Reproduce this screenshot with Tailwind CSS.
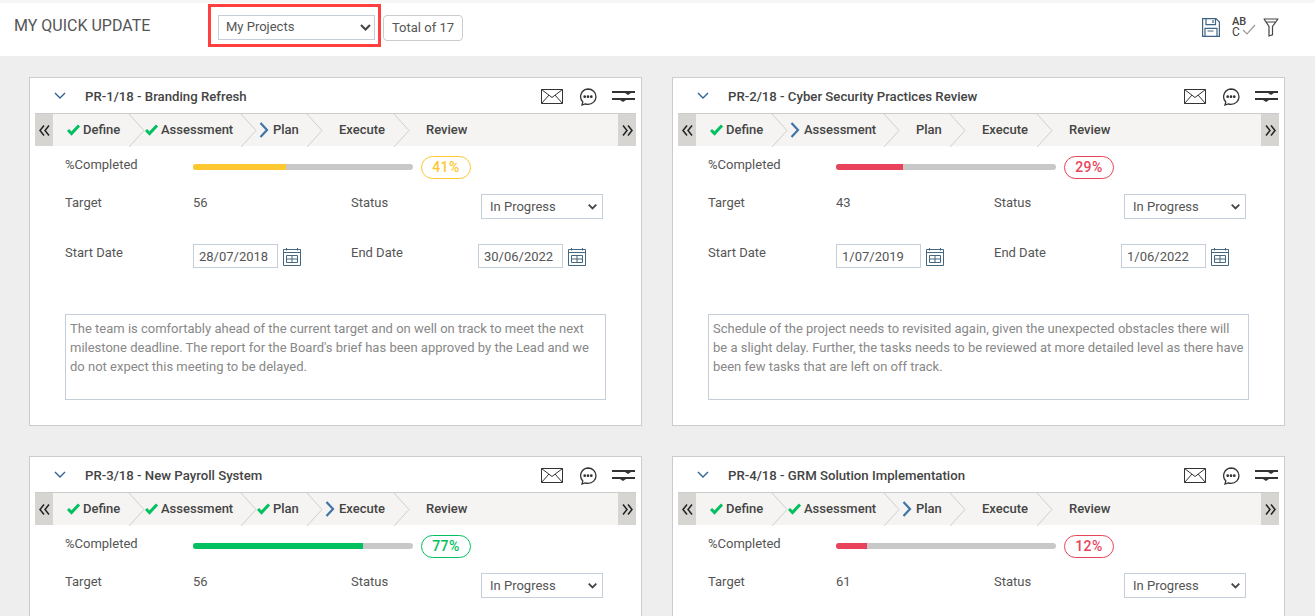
<!DOCTYPE html>
<html lang="en">
<head>
  <meta charset="UTF-8" />
  <title>My Quick Update</title>
  <script src="https://cdn.jsdelivr.net/npm/@tailwindcss/browser@4"></script>
</head>
<body class="h-[616px] overflow-hidden bg-[#eeeeee] font-['Roboto',sans-serif] text-[13px] text-[#555555]">
  <!-- Top bar -->
  <div class="h-[56px] flex items-center bg-white border-t-[3px] border-[#f6f6f6] pb-[3px]">
    <h1 class="w-[208px] pl-[14px] mb-[4px] text-[16px] text-[#555555]">MY QUICK UPDATE</h1>
    <div class="w-[173px] h-[43px] mb-[5px] border-[3px] border-[#ff4040] flex items-center pl-[7px]">
      <div class="w-[157px] h-[25px] mt-[3px] border border-[#c5cfdc] flex items-center justify-between pl-[7px] pr-[3px]">
        <span>My Projects</span>
        <svg width="11" height="7" viewBox="0 0 11 7" fill="none" stroke="#444" stroke-width="2"><path d="M1 1l4.500 4.500L10 1"/></svg>
      </div>
    </div>
    <div class="ml-[2px] w-[80px] h-[26px] border border-[#cccccc] rounded-[4px] flex items-center justify-center">Total of 17</div>
    <div class="ml-auto mr-[36px] flex items-center mt-[-2px]">
      <svg width="18" height="19" viewBox="0 0 18 19" fill="none" stroke="#3f6382" stroke-width="1.200"><path d="M.6.600h13.400L17.400 4v14.400H.6z"/><path d="M4 .6v6h9.500v-6M11 2v3M3 18.400v-8h12v8M5.500 13h6"/></svg>
      <div class="relative ml-[12px] w-[24px] h-[20px] flex flex-col text-[11px] leading-[10px] font-medium text-[#444444]">
        <span>AB</span>
        <span class="font-normal text-[12px]">C</span>
        <svg class="absolute left-0 top-0" width="24" height="20" viewBox="0 0 24 20" fill="none"><path d="M11 13l4 4 8-9" stroke="#999" stroke-width="1.200"/></svg>
      </div>
      <svg class="ml-[7px]" width="16" height="19" viewBox="0 0 16 19" fill="none" stroke="#444" stroke-width="1.200"><path d="M.6 1h14.800M1 1l5 7.500V18l3.500-1.200V8.500L15 1M3 4h10"/></svg>
    </div>
  </div>

  <div id="cards" class="grid grid-cols-[613px_613px] gap-x-[30px] gap-y-[30px] pl-[29px] pt-[21px]"></div>

  <script>
    const projects = [
      { title: "PR-1/18 - Branding Refresh", done: 2, pct: 41, fill: 42.3, bar: "bg-[#fdc82f]", pill: "border-[#fdc82f] text-[#fdc82f]", target: 56, start: "28/07/2018", end: "30/06/2022",
        note: "The team is comfortably ahead of the current target and on well on track to meet the next milestone deadline. The report for the Board's brief has been approved by the Lead and we do not expect this meeting to be delayed." },
      { title: "PR-2/18 - Cyber Security Practices Review", done: 1, pct: 29, fill: 30.5, bar: "bg-[#e8435a]", pill: "border-[#e8435a] text-[#e8435a]", target: 43, start: "1/07/2019", end: "1/06/2022",
        note: "Schedule of the project needs to revisited again, given the unexpected obstacles there will be a slight delay. Further, the tasks needs to be reviewed at more detailed level as there have been few tasks that are left on off track." },
      { title: "PR-3/18 - New Payroll System", done: 3, pct: 77, fill: 77.3, bar: "bg-[#00c060]", pill: "border-[#00c060] text-[#00c060]", target: 56, start: "", end: "", note: "" },
      { title: "PR-4/18 - GRM Solution Implementation", done: 2, pct: 12, fill: 14, bar: "bg-[#e8435a]", pill: "border-[#e8435a] text-[#e8435a]", target: 61, start: "", end: "", note: "" },
    ];

    const steps = [
      { name: "Define", cls: "w-[91px] pl-[14px]" },
      { name: "Assessment", cls: "w-[112px] pl-[1px]" },
      { name: "Plan", cls: "w-[66px] pl-[1px]" },
      { name: "Execute", cls: "w-[87px] pl-[1px]" },
      { name: "Review", cls: "w-[100px] pl-[1px]" },
    ];

    const check = `<svg width="14" height="12" viewBox="0 0 14 12" fill="none" stroke="#00c060" stroke-width="3"><path d="M1 6l3.500 3.500L12 1.500"/></svg>`;
    const current = `<svg width="12" height="16" viewBox="0 0 12 16" fill="none" stroke="#3f74a6" stroke-width="2.200"><path d="M3.500 1l6.500 7-6.500 7"/></svg>`;
    const separator = `<svg class="absolute right-[-1px] top-0" width="17" height="33" viewBox="0 0 17 33" fill="none" stroke="#cfcfcf" stroke-width="1"><path d="M1 0l15 16.500L1 33"/></svg>`;
    const calendar = `<svg width="18" height="19" viewBox="0 0 18 19" fill="none" stroke="#45667f" stroke-width="1"><path d="M.5 2.500h17v16H.5zM3.500 1v2.500M14.500 1v2.500M.5 5.500h17"/><path d="M3.500 8.500h11v7h-11zM9 8.500v7M3.500 12h11"/></svg>`;
    const chevronSm = `<svg width="9" height="6" viewBox="0 0 9 6" fill="none" stroke="#444" stroke-width="1.800"><path d="M.7.700l3.800 3.800L8.300.7"/></svg>`;

    function stepRow(done) {
      return steps.map((s, i) => {
        let icon = "";
        if (i < done) icon = check;
        if (i === done) icon = current;
        return `<div class="relative h-full flex items-center shrink-0 ${s.cls}">
          <span class="w-[16px] shrink-0 flex items-center">${icon}</span>
          <span class="font-medium text-[#444444]">${s.name}</span>
          ${i < 4 ? separator : ""}
        </div>`;
      }).join("");
    }

    function dateField(val, width) {
      return `<div class="flex items-center gap-[5px]">
        <div class="${width} h-[24px] border border-[#c5cfdc] flex items-center pl-[5px] pt-[1px]">${val}</div>${calendar}
      </div>`;
    }

    document.getElementById("cards").innerHTML = projects.map(p => `
      <div class="h-[349px] bg-white border border-[#cccccc] px-[5px]">
        <div class="h-[35px] flex items-center">
          <svg class="ml-[19px]" width="12" height="8" viewBox="0 0 12 8" fill="none" stroke="#2f6496" stroke-width="1.400"><path d="M1 1l5 5 5-5"/></svg>
          <h2 class="ml-[19px] mt-[2px] text-[13.2px] font-medium text-[#444444]">${p.title}</h2>
          <div class="ml-auto mr-[1px] flex items-center mt-[2px]">
            <svg width="22" height="15" viewBox="0 0 22 15" fill="none" stroke="#333" stroke-width="1"><path d="M.5.500h21v14H.5zM.5.500l10.500 8 10.500-8M.5 14.500l7.500-8.500M21.500 14.500l-7.500-8.500"/></svg>
            <svg class="ml-[16px]" width="18" height="18" viewBox="0 0 18 18" fill="none" stroke="#333" stroke-width="1.300"><path d="M9 1a8 7.700 0 0 1 0 15.400c-1 0-2-.2-2.800-.5L3 17l.8-3A7.700 7.700 0 0 1 9 1z"/><circle cx="5.700" cy="8.700" r=".7" fill="#333"/><circle cx="9" cy="8.700" r=".7" fill="#333"/><circle cx="12.300" cy="8.700" r=".7" fill="#333"/></svg>
            <svg class="ml-[15px]" width="23" height="14" viewBox="0 0 23 14" fill="#333"><path d="M0 1h23v2H0zM0 8h23v2H0zM13 3h6l-3 2zM8 10h6l-3 2z"/></svg>
          </div>
        </div>
        <div class="h-[33px] flex items-center bg-[#f5f4f2] border-t border-[#cccccc]">
          <div class="w-[18px] h-full shrink-0 bg-[#d6d5d1] flex items-center justify-center">
            <svg width="11" height="11" viewBox="0 0 11 11" fill="none" stroke="#222" stroke-width="1.500"><path d="M5 .5L1 5.500l4 5M10 .5L6 5.500l4 5"/></svg>
          </div>
          ${stepRow(p.done)}
          <div class="ml-auto w-[18px] h-full shrink-0 bg-[#d6d5d1] flex items-center justify-center">
            <svg width="11" height="11" viewBox="0 0 11 11" fill="none" stroke="#222" stroke-width="1.500"><path d="M1 .5l4 5-4 5M6 .5l4 5-4 5"/></svg>
          </div>
        </div>

        <div class="pl-[30px]">
          <div class="h-[23px] mt-[10px] flex items-center">
            <span class="w-[128px] mt-[-6px]">%Completed</span>
            <div class="w-[220px] h-[6px] mb-[1px] rounded-full bg-[#c8c8c8] overflow-hidden"><div class="h-full ${p.bar}" style="width:${p.fill}%"></div></div>
            <span class="ml-[8px] w-[50px] h-[23px] rounded-full border ${p.pill} bg-white flex items-center justify-center text-[14px] font-medium tracking-[0.5px]">${p.pct}%</span>
          </div>

          <div class="h-[25px] mt-[15px] flex items-center">
            <span class="w-[128px] mt-[-8px]">Target</span>
            <span class="w-[158px] mt-[-8px]">${p.target}</span>
            <span class="w-[130px] mt-[-8px]">Status</span>
            <div class="w-[122px] h-full border border-[#c5cfdc] flex items-center justify-between pl-[8px] pr-[5px]"><span>In Progress</span>${chevronSm}</div>
          </div>

          <div class="h-[24px] mt-[25px] flex items-center">
            <span class="w-[128px] mt-[-6px]">Start Date</span>
            <div class="w-[158px]">${dateField(p.start, "w-[85px]")}</div>
            <span class="w-[127px] mt-[-6px]">End Date</span>
            ${dateField(p.end, "w-[85px]")}
          </div>

          <div class="w-[541px] h-[86px] mt-[46px] border border-[#c5cfdc] pl-[4px] pr-[3px] py-[4px] text-[#888888] leading-[19px]">${p.note}</div>
        </div>
      </div>`).join("");
  </script>
</body>
</html>
